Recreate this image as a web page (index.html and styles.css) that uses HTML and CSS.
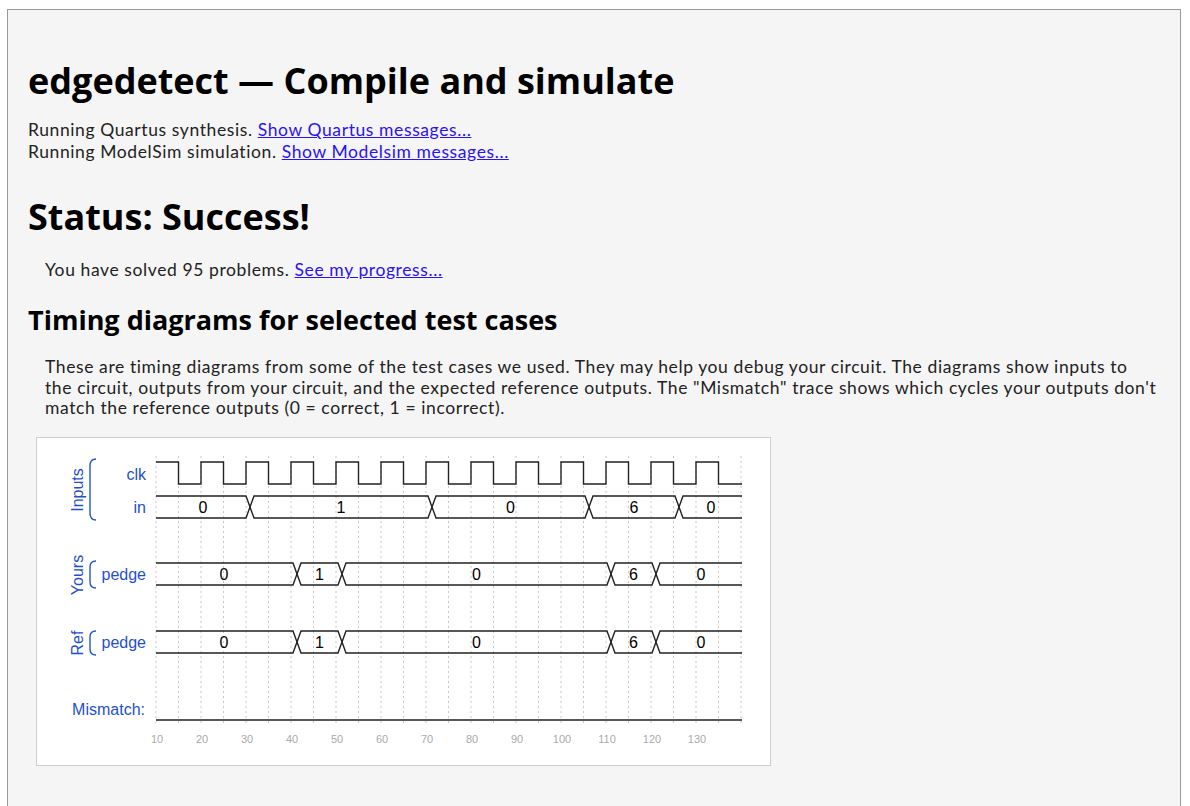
FILE: index.html
```html
<!DOCTYPE html>
<html>
<head>
<meta charset="utf-8">
<title>edgedetect — Compile and simulate</title>
<link rel="stylesheet" href="styles.css">
</head>
<body>
<div class="page">
  <h1 class="title">edgedetect — Compile and simulate</h1>
  <p class="runs">Running Quartus synthesis. <a href="#">Show Quartus messages...</a><br>Running ModelSim simulation. <a href="#">Show Modelsim messages...</a></p>
  <h2 class="status">Status: Success!</h2>
  <p class="indent solved">You have solved 95 problems. <a href="#">See my progress...</a></p>
  <h3 class="sub">Timing diagrams for selected test cases</h3>
  <p class="indent desc">These are timing diagrams from some of the test cases we used. They may help you debug your circuit. The diagrams show inputs to<br>the circuit, outputs from your circuit, and the expected reference outputs. The "Mismatch" trace shows which cycles your outputs don't<br>match the reference outputs (0 = correct, 1 = incorrect).</p>
  <div class="wave">
    <svg class="wave-svg" width="733" height="327" viewBox="37 438 733 327" xmlns="http://www.w3.org/2000/svg">
      <path class="grid" d="M156 456V724M178.5 456V724M201 456V724M223.5 456V724M246 456V724M268.5 456V724M291 456V724M313.5 456V724M336 456V724M358.5 456V724M381 456V724M403.5 456V724M426 456V724M448.5 456V724M471 456V724M493.5 456V724M516 456V724M538.5 456V724M561 456V724M583.5 456V724M606 456V724M628.5 456V724M651 456V724M673.5 456V724M696 456V724M718.5 456V724M741 456V724"/>

      <g class="labels">
        <text class="rot" transform="translate(83 490) rotate(-90)">Inputs</text>
        <text class="rot" transform="translate(83 575) rotate(-90)">Yours</text>
        <text class="rot" transform="translate(83 643) rotate(-90)">Ref</text>
        <text class="sig" x="146" y="480">clk</text>
        <text class="sig" x="146" y="513">in</text>
        <text class="sig" x="146" y="580">pedge</text>
        <text class="sig" x="146" y="648">pedge</text>
        <text class="sig" x="145" y="715">Mismatch:</text>
      </g>
      <path class="brace" d="M96 459Q90 459 90 466V513Q90 520 96 520"/>
      <path class="brace" d="M96 561Q90 561 90 567V582Q90 588 96 588"/>
      <path class="brace" d="M96 631Q90 631 90 637V649Q90 655 96 655"/>

      <path class="sigline" d="M156 462H178.5V484H201V462H223.5V484H246V462H268.5V484H291V462H313.5V484H336V462H358.5V484H381V462H403.5V484H426V462H448.5V484H471V462H493.5V484H516V462H538.5V484H561V462H583.5V484H606V462H628.5V484H651V462H673.5V484H696V462H718.5V484H742"/>

      <path class="sigline" d="M156 496H246L250 507L246 518H156"/>
      <path class="sigline" d="M254 496H428L432 507L428 518H254L250 507Z"/>
      <path class="sigline" d="M436 496H585L589 507L585 518H436L432 507Z"/>
      <path class="sigline" d="M593 496H675L679 507L675 518H593L589 507Z"/>
      <path class="sigline" d="M742 496H683L679 507L683 518H742"/>
      <g class="vals">
        <text x="203" y="512.5">0</text>
        <text x="341" y="512.5">1</text>
        <text x="510.5" y="512.5">0</text>
        <text x="634" y="512.5">6</text>
        <text x="711" y="512.5">0</text>
      </g>

      <path class="sigline" d="M156 563H293L297 574L293 585H156"/>
      <path class="sigline" d="M301 563H338L342 574L338 585H301L297 574Z"/>
      <path class="sigline" d="M346 563H607L611 574L607 585H346L342 574Z"/>
      <path class="sigline" d="M615 563H652L656 574L652 585H615L611 574Z"/>
      <path class="sigline" d="M742 563H660L656 574L660 585H742"/>
      <g class="vals">
        <text x="224" y="579.5">0</text>
        <text x="319.5" y="579.5">1</text>
        <text x="476.5" y="579.5">0</text>
        <text x="633.5" y="579.5">6</text>
        <text x="701" y="579.5">0</text>
      </g>

      <path class="sigline" d="M156 631H293L297 642L293 653H156"/>
      <path class="sigline" d="M301 631H338L342 642L338 653H301L297 642Z"/>
      <path class="sigline" d="M346 631H607L611 642L607 653H346L342 642Z"/>
      <path class="sigline" d="M615 631H652L656 642L652 653H615L611 642Z"/>
      <path class="sigline" d="M742 631H660L656 642L660 653H742"/>
      <g class="vals">
        <text x="224" y="647.5">0</text>
        <text x="319.5" y="647.5">1</text>
        <text x="476.5" y="647.5">0</text>
        <text x="633.5" y="647.5">6</text>
        <text x="701" y="647.5">0</text>
      </g>

      <path class="sigline" d="M156 720H742"/>

      <g class="ticks">
        <text x="157" y="743">10</text>
        <text x="202" y="743">20</text>
        <text x="247" y="743">30</text>
        <text x="292" y="743">40</text>
        <text x="337" y="743">50</text>
        <text x="382" y="743">60</text>
        <text x="427" y="743">70</text>
        <text x="472" y="743">80</text>
        <text x="517" y="743">90</text>
        <text x="562" y="743">100</text>
        <text x="607" y="743">110</text>
        <text x="652" y="743">120</text>
        <text x="697" y="743">130</text>
      </g>
    </svg>
  </div>
</div>
</body>
</html>
```

FILE: styles.css
```css
html, body {
  margin: 0;
  padding: 0;
  background: #ffffff;
}

body {
  font-family: "Lato", "Liberation Sans", sans-serif;
  color: #222;
}

.page {
  margin: 9px 9px 0 7px;
  border: 1px solid #9a9a9a;
  border-bottom: none;
  background: #f5f5f5;
  padding: 41px 20px 40px 20px;
  min-height: 760px;
  box-sizing: border-box;
}

.title,
.status,
.sub {
  font-family: "Open Sans", "DejaVu Sans", sans-serif;
  font-weight: 700;
  color: #000;
  margin: 0;
}

.title {
  font-size: 36px;
  line-height: 60px;
}

.runs {
  margin: 8px 0 0 0;
  font-size: 17.5px;
  letter-spacing: 0.6px;
  line-height: 22px;
}

.status {
  font-size: 36px;
  line-height: 50px;
  margin-top: 29px;
}

.sub {
  font-size: 27px;
  line-height: 40px;
  margin-top: 19px;
}

.indent {
  margin-left: 17px;
  font-size: 17.5px;
  letter-spacing: 0.6px;
}

.solved {
  margin-top: 17px;
  margin-bottom: 0;
  line-height: 22px;
}

.desc {
  margin-top: 17px;
  margin-bottom: 0;
  white-space: nowrap;
  line-height: 20.5px;
}

a {
  color: #2a12f5;
  text-decoration: underline;
}

.wave {
  margin: 18px 0 0 8px;
  width: 733px;
  height: 327px;
  background: #fff;
  border: 1px solid #cfcfcf;
}

.wave-svg {
  display: block;
  font-family: "Liberation Sans", Arial, sans-serif;
}

.grid {
  fill: none;
  stroke: #c8c8c8;
  stroke-width: 1;
  stroke-dasharray: 2 3;
}

.sigline {
  fill: none;
  stroke: #222;
  stroke-width: 1.4;
}

.brace {
  fill: none;
  stroke: #2255cc;
  stroke-width: 1.4;
}

.labels text {
  fill: #1f4fcf;
  font-size: 16px;
}

.rot {
  text-anchor: middle;
}

.sig {
  text-anchor: end;
}

.vals text {
  text-anchor: middle;
  font-size: 16px;
  fill: #000;
}

.ticks text {
  text-anchor: middle;
  font-size: 11px;
  fill: #aaa;
}
```
